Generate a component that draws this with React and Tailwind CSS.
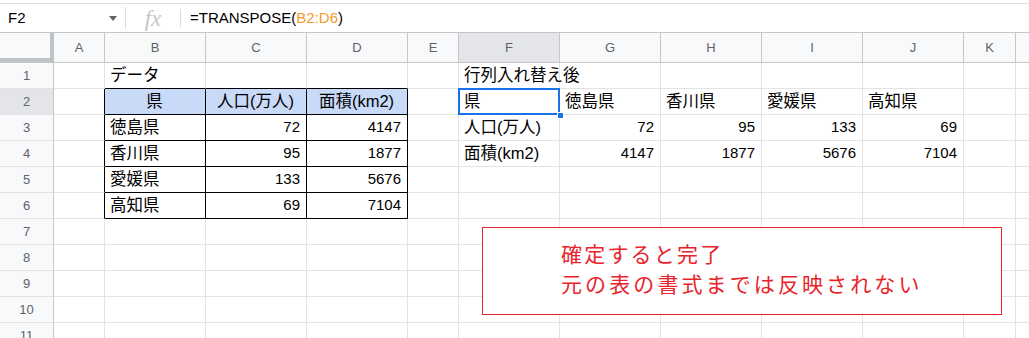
const cols = [
  ["A", "w-[51px]"],
  ["B", "w-[101px]"],
  ["C", "w-[101px]"],
  ["D", "w-[101px]"],
  ["E", "w-[51px]"],
  ["F", "w-[101px]"],
  ["G", "w-[101px]"],
  ["H", "w-[101px]"],
  ["I", "w-[101px]"],
  ["J", "w-[101px]"],
  ["K", "w-[52px]"],
]

// sheet content keyed by "col+row"
const data = {
  B1: "データ",
  F1: "行列入れ替え後",
  B2: "県",
  C2: "人口(万人)",
  D2: "面積(km2)",
  F2: "県",
  G2: "徳島県",
  H2: "香川県",
  I2: "愛媛県",
  J2: "高知県",
  B3: "徳島県",
  C3: 72,
  D3: 4147,
  F3: "人口(万人)",
  G3: 72,
  H3: 95,
  I3: 133,
  J3: 69,
  B4: "香川県",
  C4: 95,
  D4: 1877,
  F4: "面積(km2)",
  G4: 4147,
  H4: 1877,
  I4: 5676,
  J4: 7104,
  B5: "愛媛県",
  C5: 133,
  D5: 5676,
  B6: "高知県",
  C6: 69,
  D6: 7104,
}

const inTable = (c, r) => "BCD".includes(c) && r >= 2 && r <= 6

function Cell({ col, width, row }) {
  const key = col + row
  const value = data[key]
  const isNum = typeof value === "number"
  const isHead = row === 2 && "BCD".includes(col)

  let right = "border-r-[#e2e3e3]"
  let bottom = "border-b-[#e2e3e3]"
  if (inTable(col, row)) {
    right = "border-r-black"
    bottom = "border-b-black"
  }
  if (col === "A" && row >= 2 && row <= 6) right = "border-r-black"
  if (row === 1 && "BCD".includes(col)) bottom = "border-b-black"

  return (
    <div
      className={`relative ${width} h-[26px] shrink-0 border-r border-b ${right} ${bottom} flex items-center px-[5px] pr-[6px] text-black whitespace-nowrap ${
        isNum ? "text-[15px]" : "text-[16.5px]"
      } ${isHead ? "bg-[#c9daf8] justify-center" : isNum ? "justify-end" : ""}`}
    >
      {value}
      {key === "F2" && (
        <>
          <div className="absolute -left-[1px] -top-[1px] w-[102px] h-[27px] border-2 border-[#1a73e8]" />
          <div className="absolute -right-[5px] -bottom-[5px] w-[7px] h-[7px] bg-[#1a73e8] border border-white z-10" />
        </>
      )}
    </div>
  )
}

export default function App() {
  const rows = [1, 2, 3, 4, 5, 6, 7, 8, 9, 10, 11]

  return (
    <div className="relative w-[1029px] h-[338px] overflow-hidden bg-white [font-family:'Liberation_Sans','Noto_Sans_CJK_JP',sans-serif]">
      {/* Formula bar */}
      <div className="mt-[3px] h-[30px] border-t border-b border-t-[#e0e0e0] border-b-[#c4c7c5] flex items-center">
        <div className="w-[125px] flex items-center justify-between pl-[8px] pr-[8px] text-[15px] text-black">
          <span>F2</span>
          <span className="w-0 h-0 border-l-[4px] border-r-[4px] border-t-[5px] border-l-transparent border-r-transparent border-t-[#5f6368]" />
        </div>
        <div className="w-px h-[22px] bg-[#dadce0]" />
        <div className="w-[54px] flex justify-center text-[23px] italic text-[#c4c7c5] [font-family:'Liberation_Serif',serif] leading-none">
          fx
        </div>
        <div className="w-px h-[18px] bg-[#dadce0]" />
        <div className="pl-[9px] text-[15px] text-black">
          =TRANSPOSE(<span className="text-[#f29b2c]">B2:D6</span>)
        </div>
      </div>

      {/* Column headers */}
      <div className="flex h-[30px] bg-[#f8f9fa] border-b border-[#c4c7c5]">
        <div className="w-[54px] shrink-0 relative">
          <div className="absolute right-0 top-0 w-[4px] h-full bg-[#c0c3c6]" />
          <div className="absolute left-0 bottom-0 h-[4px] w-full bg-[#c0c3c6]" />
        </div>
        {cols.map(([c, w]) => (
          <div
            key={c}
            className={`${w} shrink-0 border-r border-[#c4c7c5] flex items-center justify-center text-[13px] text-[#5f6368] ${
              c === "F" ? "bg-[#e3e5e8]" : ""
            }`}
          >
            {c}
          </div>
        ))}
        <div className="flex-1" />
      </div>

      {/* Rows */}
      {rows.map((r) => (
        <div key={r} className="flex">
          <div
            className={`w-[54px] h-[26px] shrink-0 border-r border-b border-r-[#c4c7c5] border-b-[#e2e3e3] flex items-center justify-center text-[13px] text-[#5f6368] ${
              r === 2 ? "bg-[#e3e5e8]" : "bg-[#f8f9fa]"
            }`}
          >
            {r}
          </div>
          {cols.map(([c, w]) => (
            <Cell key={c} col={c} width={w} row={r} />
          ))}
          <div className="flex-1 h-[26px] border-b border-[#e2e3e3]" />
        </div>
      ))}

      {/* Note box */}
      <div className="absolute left-[482px] top-[227px] w-[520px] h-[88px] bg-white border border-[#e8232b] pl-[78px] pt-[10px] text-[21px] leading-[30px] text-[#e8232b] [font-family:'Noto_Sans_CJK_JP',sans-serif]">
        <div className="tracking-[2.2px]">確定すると完了</div>
        <div className="tracking-[3.1px]">元の表の書式までは反映されない</div>
      </div>
    </div>
  )
}
